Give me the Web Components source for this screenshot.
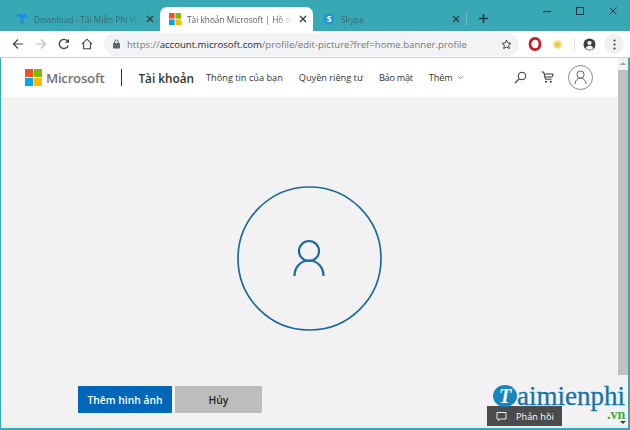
<!DOCTYPE html>
<html><head><meta charset="utf-8">
<style>
html,body{margin:0;padding:0;width:630px;height:430px;overflow:hidden;background:#38a9b4;font-family:"Open Sans","Noto Sans",sans-serif}
</style></head><body>
<browser-window>
  <tab-strip slot="tabs"></tab-strip>
  <tool-bar slot="toolbar"></tool-bar>
  <site-header slot="header"></site-header>
  <picture-editor slot="main"></picture-editor>
  <water-mark slot="mark"></water-mark>
</browser-window>
<script>
function el(name, html){
  customElements.define(name, class extends HTMLElement{
    constructor(){super();this.attachShadow({mode:'open'}).innerHTML=html;}
  });
}
el('browser-window',`<style>
:host{display:flex;flex-direction:column;width:630px;height:430px;background:#38a9b4;position:relative}
.page{flex:1;display:flex;min-height:0;margin:0 2px 2px 1px;background:#f2f2f2;position:relative;border-bottom:2px solid #e2f3f5}
.col{flex:1;display:flex;flex-direction:column;min-width:0}
.sb{width:10px;background:#f1f1f1;display:flex;flex-direction:column;align-items:center;flex:none}
.sb i{display:block;width:0;height:0;border:3px solid transparent;border-top:0;border-bottom:3px solid #a3a3a3;margin-top:4px}
.sb b{display:block;width:100%;height:305px;background:#c1c1c1;margin-top:5px}
</style>
<slot name="tabs"></slot><slot name="toolbar"></slot>
<div class="page"><div class="col"><slot name="header"></slot><slot name="main"></slot></div><div class="sb"><i></i><b></b></div></div>
<slot name="mark"></slot>`);

el('browser-tab',`<style>
:host{display:flex;align-items:center;height:24px;box-sizing:border-box;width:153px;padding:0 6px 0 9px;font:8.300px "Open Sans","Noto Sans",sans-serif;color:#2f6a72;gap:6px;flex:none}
:host([active]){background:#fff;border-radius:7px 7px 0 0;color:#5c5c5c}
.t{flex:1;white-space:nowrap;overflow:hidden;min-width:0;-webkit-mask-image:linear-gradient(90deg,#000 85%,transparent)}
svg{flex:none;display:block}
</style><slot name="icon"></slot><span class="t"><slot></slot></span>
<svg width="8" height="8" viewBox="0 0 8 8"><path d="M1 1l6 6M7 1L1 7" stroke="#2f3f44" stroke-width="1.400"/></svg>`);

el('tab-strip',`<style>
:host{display:flex;align-items:flex-end;height:31px;box-sizing:border-box;position:relative;flex:none}
.sp{width:7px;flex:none}
.div{width:1px;height:14px;background:#6fb9c1;margin:0 0 5px 0;flex:none}
.plus{margin:0 0 7px 11px;flex:none;display:block}
.win{position:absolute;right:0;top:0;display:flex}
.win span{display:flex;width:33px;height:22px;align-items:center;justify-content:center}
</style>
<div class="sp"></div>
<browser-tab><svg slot="icon" width="12" height="12" viewBox="0 0 12 12"><path d="M1 1h10v3H7.600v7H4.400V4H1z" fill="#1d8fe0"/></svg>Download - Tải Miễn Phí VN</browser-tab>
<browser-tab active><svg slot="icon" width="12" height="12" viewBox="0 0 12 12"><rect width="5.600" height="5.600" fill="#f25022"/><rect x="6.400" width="5.600" height="5.600" fill="#7fba00"/><rect y="6.400" width="5.600" height="5.600" fill="#00a4ef"/><rect x="6.400" y="6.400" width="5.600" height="5.600" fill="#ffb900"/></svg>Tài khoản Microsoft | Hồ sơ của bạn</browser-tab>
<browser-tab style="padding-left:10px"><svg slot="icon" width="12" height="12" viewBox="0 0 12 12"><circle cx="6" cy="6" r="5.500" fill="#1f96dc"/><text x="6" y="9" font-size="8.500" font-weight="700" font-family="Open Sans" fill="#fff" text-anchor="middle">S</text></svg>Skype</browser-tab>
<div class="div"></div>
<svg class="plus" width="11" height="11" viewBox="0 0 11 11"><path d="M5.500 1v9M1 5.500h9" stroke="#23383d" stroke-width="1.600"/></svg>
<div class="win">
<span><svg width="11" height="11" viewBox="0 0 11 11"><path d="M1 5.500h8" stroke="#20383d" stroke-width="1.200"/></svg></span>
<span><svg width="11" height="11" viewBox="0 0 11 11"><rect x="1.500" y="1.500" width="7" height="7" fill="none" stroke="#20383d" stroke-width="1"/></svg></span>
<span><svg width="11" height="11" viewBox="0 0 11 11"><path d="M1.500 1.500l7 7M8.500 1.500l-7 7" stroke="#20383d" stroke-width="1"/></svg></span>
</div>`);

el('tool-bar',`<style>
:host{display:flex;align-items:center;height:27px;box-sizing:border-box;background:#fff;border-bottom:1px solid #cfd3d6;flex:none;padding-left:12px}
svg{display:block;flex:none}
.nav{display:flex;gap:11px;align-items:center}
.omni{margin-left:11px;width:415px;height:23px;flex:none;box-sizing:border-box;background:#f1f3f4;border-radius:12px;display:flex;align-items:center;padding:0 7px 0 8px;font:9.580px "Open Sans","Noto Sans",sans-serif;color:#7a7a7a;white-space:nowrap}
.omni b{font-weight:400;color:#2b2b2b}
.u{flex:1;margin-left:6px;overflow:hidden;min-width:0}
</style>
<div class="nav">
<svg width="12" height="12" viewBox="0 0 12 12"><path d="M11 6H1.500M6 1.500L1.500 6 6 10.500" fill="none" stroke="#444" stroke-width="1.200"/></svg>
<svg width="12" height="12" viewBox="0 0 12 12"><path d="M1 6h9.500M6 1.500L10.500 6 6 10.500" fill="none" stroke="#bcbcbc" stroke-width="1.200"/></svg>
<svg width="12" height="12" viewBox="0 0 12 12"><path d="M10.300 7.500A4.600 4.600 0 1 1 9.400 2.800L10.600 4" fill="none" stroke="#444" stroke-width="1.300"/><path d="M11 .8v4H7z" fill="#444"/></svg>
<svg width="12" height="12" viewBox="0 0 12 12"><path d="M1 6.200L6 1.200l5 5M2.600 5v5.800h6.800V5" fill="none" stroke="#444" stroke-width="1.100"/></svg>
</div>
<div class="omni">
<svg width="9" height="10" viewBox="0 0 9 10"><rect x="1" y="4" width="7" height="5.500" rx=".8" fill="#5f6368"/><path d="M2.700 4V2.800a1.800 1.800 0 0 1 3.600 0V4" fill="none" stroke="#5f6368" stroke-width="1"/></svg>
<span class="u">https://<b>account.microsoft.com</b>/profile/edit-picture?fref=home.banner.profile</span>
<svg width="11" height="11" viewBox="0 0 11 11"><path d="M5.500 1l1.300 3 3.200.3-2.400 2.100.7 3.200-2.800-1.700-2.800 1.700.7-3.200L1 4.300 4.200 4z" fill="none" stroke="#444" stroke-width="1"/></svg>
</div>
<svg width="14" height="14" viewBox="0 0 14 14" style="margin-left:9px"><ellipse cx="7" cy="7" rx="5" ry="5.600" fill="none" stroke="#cc1b22" stroke-width="2.800"/></svg>
<svg width="11" height="11" viewBox="0 0 11 11" style="margin-left:10px"><circle cx="5.500" cy="5.500" r="4.200" fill="#f4d774"/><circle cx="5.500" cy="5.500" r="2" fill="#eec04c"/></svg>
<span style="width:1px;height:13px;background:#e4e4e4;margin-left:11px;display:block"></span>
<svg width="13" height="13" viewBox="0 0 13 13" style="margin-left:8px"><circle cx="6.500" cy="6.500" r="6" fill="#3c4043"/><circle cx="6.500" cy="5" r="2.100" fill="#fff"/><path d="M2.800 10.200c.7-1.800 2.200-2.400 3.700-2.400s3 .6 3.700 2.400a5 5 0 0 1-7.400 0z" fill="#fff"/></svg>
<span style="width:20px;height:20px;border-radius:50%;background:#eef0f1;margin-left:8px;display:flex;align-items:center;justify-content:center;flex:none"><svg width="3" height="11" viewBox="0 0 3 11"><circle cx="1.500" cy="1.500" r="1.100" fill="#444"/><circle cx="1.500" cy="5.500" r="1.100" fill="#444"/><circle cx="1.500" cy="9.500" r="1.100" fill="#444"/></svg></span>`);

el('site-header',`<style>
:host{display:flex;align-items:center;height:39px;background:#fff;flex:none;padding:0 25px 0 24px;box-sizing:border-box;color:#262626}
.logo{font:600 13.300px "Open Sans","Noto Sans",sans-serif;color:#737373;margin-left:4px;letter-spacing:-.3px}
.bar{width:1px;height:17px;background:#2b2b2b;margin-left:17px;flex:none}
.acc{font:600 11.800px "Open Sans","Noto Sans",sans-serif;margin-left:16px;color:#333;white-space:nowrap}
nav{display:flex;gap:16px;margin-left:12px;font:9.200px "Open Sans","Noto Sans",sans-serif;color:#333;white-space:nowrap;align-items:center}
.icons{display:flex;align-items:center;margin-left:auto;gap:14px}
svg{display:block;flex:none}
.av{width:25px;height:25px;box-sizing:border-box;border:1px solid #8a8a8a;border-radius:50%;display:flex;align-items:center;justify-content:center}
</style>
<svg width="17" height="17" viewBox="0 0 17 17"><rect width="8" height="8" fill="#f25022"/><rect x="9" width="8" height="8" fill="#7fba00"/><rect y="9" width="8" height="8" fill="#00a4ef"/><rect x="9" y="9" width="8" height="8" fill="#ffb900"/></svg>
<span class="logo">Microsoft</span><span class="bar"></span><span class="acc">Tài khoản</span>
<nav><span>Thông tin của bạn</span><span>Quyền riêng tư</span><span style="letter-spacing:-.3px">Bảo mật</span><span style="display:flex;align-items:center;gap:4px;letter-spacing:-.1px">Thêm <svg width="7" height="5" viewBox="0 0 7 5"><path d="M.8 1l2.700 2.700L6.200 1" fill="none" stroke="#777" stroke-width=".9"/></svg></span></nav>
<div class="icons">
<svg width="13" height="13" viewBox="0 0 13 13"><circle cx="8" cy="5" r="3.800" fill="none" stroke="#333" stroke-width="1"/><path d="M5.200 7.800L1 12" stroke="#333" stroke-width="1.200"/></svg>
<svg width="13" height="13" viewBox="0 0 13 13"><path d="M.5 1h2.200l1.600 7.200h6.200M3.200 3h9l-1 3H4" fill="none" stroke="#333" stroke-width="1"/><circle cx="5" cy="10.800" r="1" fill="#333"/><circle cx="9.800" cy="10.800" r="1" fill="#333"/></svg>
<span class="av"><svg width="13" height="15" viewBox="0 0 13 15"><circle cx="6.500" cy="4.600" r="3.600" fill="none" stroke="#666" stroke-width="1"/><path d="M1 14c0-3.400 2.400-5.800 5.500-5.800S12 10.600 12 14" fill="none" stroke="#666" stroke-width="1"/></svg></span>
</div>`);

el('picture-editor',`<style>
:host{display:flex;flex-direction:column;flex:1;min-height:0;position:relative}
.stage{height:289px;display:flex;align-items:flex-end;justify-content:center;flex:none;box-sizing:border-box;padding-bottom:55px}
.stage svg{display:block}
.btns{display:flex;gap:3px;padding-left:77px}
button{all:unset;display:flex;align-items:center;justify-content:center;width:94px;height:27px;font:600 10.300px "Open Sans","Noto Sans",sans-serif;box-sizing:border-box}
.p{background:#0067b8;color:#fff}
.s{background:#bdbdbd;color:#262626;width:87px}
</style>
<div class="stage"><svg width="145" height="145" viewBox="0 0 145 145"><circle cx="72.500" cy="72.500" r="71.500" fill="none" stroke="#1d6aa0" stroke-width="1.700"/><g fill="none" stroke="#1d6aa0" stroke-width="2.200"><circle cx="72" cy="65" r="10"/><path d="M57.500 90c0-8.500 6-15.500 14.500-15.500S86.500 81.500 86.500 90"/></g></svg></div>
<div class="btns"><button class="p">Thêm hình ảnh</button><button class="s">Hủy</button></div>
<feedback-badge></feedback-badge>`);

el('feedback-badge',`<style>
:host{position:absolute;right:56px;bottom:0;width:75px;height:20px;background:#4b4b4b;color:#fff;display:flex;align-items:center;gap:9px;padding-left:9px;box-sizing:border-box;white-space:nowrap;font:9.200px "Open Sans","Noto Sans",sans-serif}
svg{display:block;flex:none}
</style>
<svg width="11" height="11" viewBox="0 0 11 11"><path d="M1 1.500h9v6.500H4L2.500 9.500V8H1z" fill="none" stroke="#fff" stroke-width=".9"/></svg><span>Phản hồi</span>`);

el('water-mark',`<style>
:host{position:absolute;left:490px;top:383px;width:140px;height:47px;display:block;pointer-events:none}
.c{position:absolute;left:3px;top:2px;width:24px;height:22px;border-radius:50%;background:#1786bf;color:#fff;display:flex;align-items:center;justify-content:center;font:italic 700 20px/1 "Liberation Serif",serif}
.t{position:absolute;left:27px;top:-2px;font:400 27px/30px "Liberation Serif",serif;color:#1472a8;-webkit-text-stroke:.3px #1472a8;text-shadow:0 0 2px #fff;white-space:nowrap}
.vn{position:absolute;left:117px;top:24px;font:700 14px/16px "Liberation Serif",serif;color:#46a546;white-space:nowrap}
.a{position:absolute;left:130px;top:38px;width:0;height:0;border:3px solid transparent;border-bottom:0;border-top:3px solid #3a3a3a}
</style>
<span class="c">T</span><span class="t">aimienphi</span><span class="vn">.vn</span><span class="a"></span>`);
</script>
</body></html>
